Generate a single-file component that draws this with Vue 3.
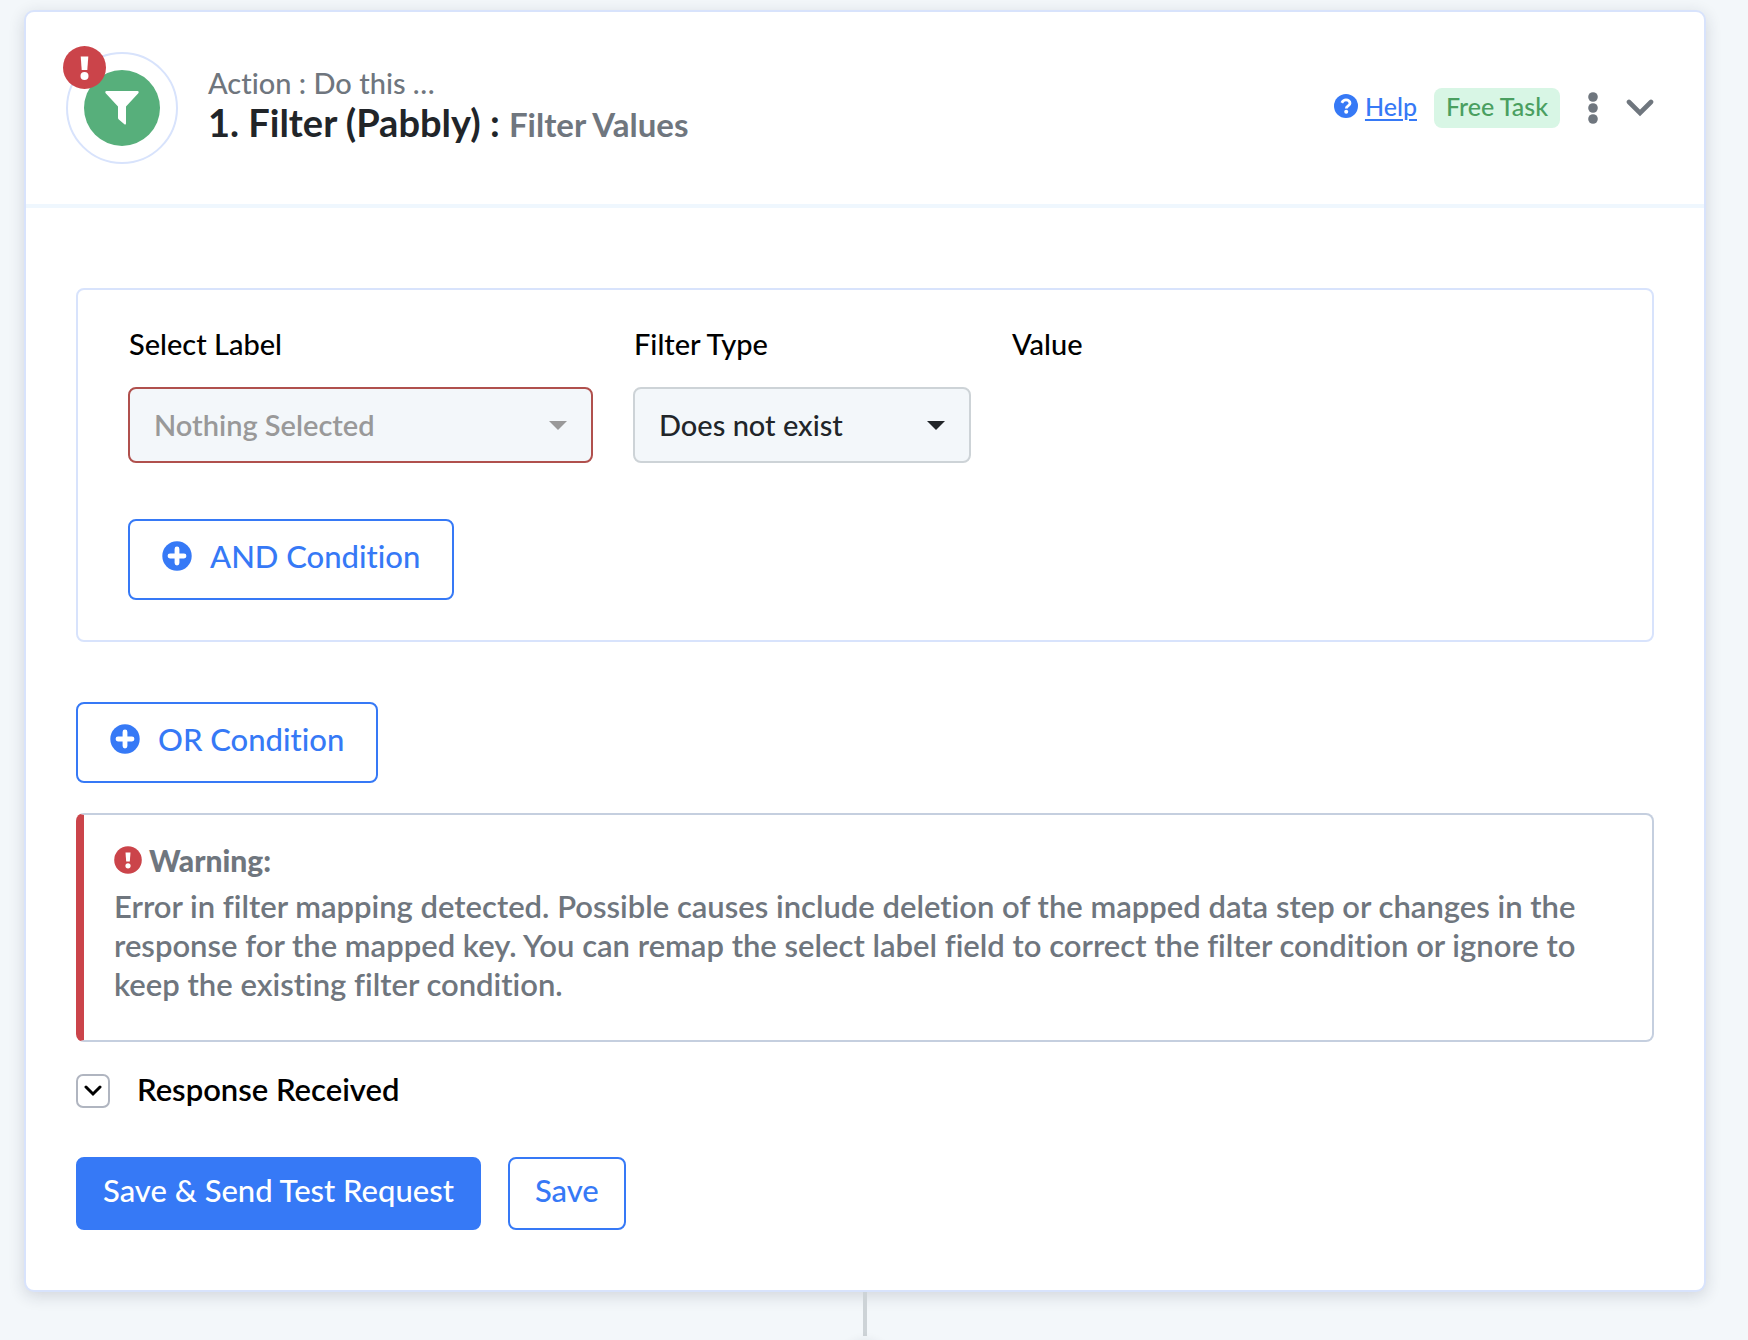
<script setup>
import { ref } from 'vue'

const label = ref('')
const filterType = ref('not-exist')
</script>

<template>
  <main class="page">
    <section class="card">
      <header class="card-header">
        <div class="app-icon">
          <span class="app-disc">
            <svg width="34" height="34" viewBox="0 0 34 34" aria-hidden="true">
              <path fill="#fff" d="M1.500 0h31c1.300 0 1.500 1.300.8 2.200L21 15.500V32c0 1.600-.8 2-1.900 1l-5-4.200c-.8-.7-1.100-1.200-1.100-2.200V15.500L.7 2.200C0 1.300.2 0 1.500 0z" />
            </svg>
          </span>
          <svg class="alert-badge" width="43" height="43" viewBox="0 0 43 43" role="img" aria-label="Error">
            <circle cx="21.500" cy="21.500" r="21.500" fill="#cb444a" />
            <path fill="#fff" d="M17.700 10.500h7.600l-1 13.500h-5.600z" />
            <circle cx="21.500" cy="30" r="4" fill="#fff" />
          </svg>
        </div>
        <div class="titles">
          <p class="kicker">Action : Do this …</p>
          <h1 class="title">1. Filter (Pabbly) : <span class="subtitle">Filter Values</span></h1>
        </div>
        <div class="header-actions">
          <a class="help" href="#help">
            <svg width="24" height="24" viewBox="0 0 24 24" aria-hidden="true">
              <circle cx="12" cy="12" r="12" fill="#3679f6" />
              <path fill="none" stroke="#fff" stroke-width="2.800" d="M7.800 8.800C8.800 6.800 10.200 5.900 12 5.900c2.200 0 4 1.400 4 3.300 0 2.700-3.700 2.600-3.700 5.200" />
              <circle cx="12.200" cy="17.800" r="2" fill="#fff" />
            </svg>
            <span>Help</span>
          </a>
          <span class="tag">Free Task</span>
          <button class="icon-button dots" type="button" aria-label="More options">
            <svg width="10" height="32" viewBox="0 0 10 32" aria-hidden="true">
              <g fill="#6f767e"><circle cx="5" cy="5" r="4.800" /><circle cx="5" cy="16" r="4.800" /><circle cx="5" cy="27" r="4.800" /></g>
            </svg>
          </button>
          <button class="icon-button" type="button" aria-label="Collapse step">
            <svg width="28" height="18" viewBox="0 0 28 18" aria-hidden="true">
              <path d="M3 3l11 11L25 3" fill="none" stroke="#6f767e" stroke-width="4.600" stroke-linecap="round" />
            </svg>
          </button>
        </div>
      </header>

      <div class="card-body">
        <div class="conditions">
          <div class="fields">
            <div class="field">
              <label for="select-label">Select Label</label>
              <div class="select-wrap">
                <select id="select-label" v-model="label" class="invalid">
                  <option value="">Nothing Selected</option>
                </select>
                <svg class="caret" width="18" height="9" viewBox="0 0 18 9" aria-hidden="true"><path fill="#999" d="M0 0h18L9 9z" /></svg>
              </div>
            </div>
            <div class="field">
              <label for="filter-type">Filter Type</label>
              <div class="select-wrap">
                <select id="filter-type" v-model="filterType">
                  <option value="not-exist">Does not exist</option>
                </select>
                <svg class="caret" width="18" height="9" viewBox="0 0 18 9" aria-hidden="true"><path fill="#212529" d="M0 0h18L9 9z" /></svg>
              </div>
            </div>
            <div class="field">
              <span class="field-heading">Value</span>
            </div>
          </div>
          <button class="button add" type="button">
            <svg width="30" height="30" viewBox="0 0 30 30" aria-hidden="true">
              <circle cx="15" cy="15" r="14.700" fill="#3679f6" />
              <path d="M15 8v14M8 15h14" stroke="#fff" stroke-width="4.800" stroke-linecap="round" />
            </svg>
            AND Condition
          </button>
        </div>

        <button class="button add" type="button">
          <svg width="30" height="30" viewBox="0 0 30 30" aria-hidden="true">
            <circle cx="15" cy="15" r="14.700" fill="#3679f6" />
            <path d="M15 8v14M8 15h14" stroke="#fff" stroke-width="4.800" stroke-linecap="round" />
          </svg>
          OR Condition
        </button>

        <div class="warning" role="alert">
          <p class="warning-title">
            <svg width="28" height="28" viewBox="0 0 28 28" aria-hidden="true">
              <circle cx="14" cy="14" r="13.800" fill="#cb444a" />
              <path fill="#fff" d="M11.500 6.500h5l-.7 9h-3.600z" />
              <circle cx="14" cy="19.800" r="2.600" fill="#fff" />
            </svg>
            Warning:
          </p>
          <p class="warning-text">
            Error in filter mapping detected. Possible causes include deletion of the mapped data step or changes in the
            response for the mapped key. You can remap the select label field to correct the filter condition or ignore to
            keep the existing filter condition.
          </p>
        </div>

        <div class="response">
          <button class="toggle" type="button" aria-labelledby="response-label">
            <svg width="18" height="12" viewBox="0 0 18 12" aria-hidden="true">
              <path d="M2 2l7 7 7-7" fill="none" stroke="#000" stroke-width="3" stroke-linecap="round" />
            </svg>
          </button>
          <span id="response-label">Response Received</span>
        </div>

        <div class="buttons">
          <button class="button primary" type="button">Save &amp; Send Test Request</button>
          <button class="button" type="button">Save</button>
        </div>
      </div>
    </section>
    <div class="connector"></div>
    <div class="next-step"></div>
  </main>
</template>

<style>
body {
  margin: 0;
  background: #f3f7fa;
}
</style>

<style scoped>
* {
  box-sizing: border-box;
}

.page {
  display: flex;
  flex-direction: column;
  align-items: center;
  height: 100vh;
  overflow: hidden;
  padding: 10px 42px 0 24px;
  background: #f3f7fa;
  font-family: Lato, "Open Sans", sans-serif;
  font-weight: 500;
  font-variant-ligatures: no-common-ligatures;
  color: #000;
}

p,
h1 {
  margin: 0;
}

svg {
  display: block;
  flex: none;
}

button,
select {
  font: inherit;
  font-variant-ligatures: no-common-ligatures;
}

.card {
  align-self: stretch;
  flex: none;
  background: #fff;
  border: 2px solid #d8e3fc;
  border-radius: 10px;
  box-shadow: 0 4px 16px rgba(30, 40, 60, 0.16);
}

.card-header {
  display: flex;
  align-items: flex-start;
  padding: 40px 50px 40px 40px;
  border-bottom: 4px solid #eff7fe;
}

.app-icon {
  position: relative;
  display: flex;
  align-items: center;
  justify-content: center;
  width: 112px;
  height: 112px;
  border: 2px solid #d8e3fc;
  border-radius: 50%;
}

.app-disc {
  display: flex;
  align-items: center;
  justify-content: center;
  width: 76px;
  height: 76px;
  border-radius: 50%;
  background: #57af7b;
}

.alert-badge {
  position: absolute;
  top: -8px;
  left: -5px;
}

.titles {
  flex: 1;
  padding: 13px 0 0 30px;
}

.kicker {
  font-size: 29px;
  line-height: 36px;
  color: #6f767e;
}

.title {
  font-size: 38px;
  line-height: 42px;
  font-weight: 700;
  color: #212529;
}

.subtitle {
  font-size: 33px;
  font-weight: 700;
  color: #6f767e;
}

.header-actions {
  display: flex;
  align-items: center;
  height: 112px;
}

.help {
  display: flex;
  align-items: center;
  gap: 7px;
  padding-bottom: 4px;
  margin-right: 17px;
  font-size: 25px;
  line-height: 32px;
  color: #3679f6;
  text-decoration: none;
}

.help span {
  text-decoration: underline;
  text-decoration-thickness: 2px;
  text-underline-offset: 3px;
}

.tag {
  padding: 2px 12px 6px;
  margin-right: 28px;
  border-radius: 8px;
  background: #d8f6e5;
  color: #4a9f60;
  font-size: 25px;
  line-height: 32px;
}

.icon-button {
  padding: 0;
  border: 0;
  background: none;
}

.dots {
  margin-right: 28px;
}

.card-body {
  display: flex;
  flex-direction: column;
  align-items: flex-start;
  padding: 80px 50px 60px;
}

.conditions {
  align-self: stretch;
  padding: 36px 50px 40px;
  margin-bottom: 60px;
  border: 2px solid #d8e3fc;
  border-radius: 8px;
}

.fields {
  display: grid;
  grid-template-columns: 465fr 338fr 591fr;
  gap: 40px;
  margin-bottom: 56px;
}

.field label,
.field-heading {
  display: block;
  padding-left: 1px;
  margin-bottom: 25px;
  font-size: 29px;
  line-height: 36px;
}

.select-wrap {
  position: relative;
}

select {
  display: block;
  width: 100%;
  height: 76px;
  padding: 0 60px 2px 24px;
  appearance: none;
  border: 2px solid #cdd3d7;
  border-radius: 8px;
  background: #f3f7fa;
  color: #212529;
  font-size: 29px;
}

select.invalid {
  border-color: #b0504d;
  color: #999;
  font-weight: 600;
}

.caret {
  position: absolute;
  top: 34px;
  right: 26px;
  pointer-events: none;
}

.button {
  display: flex;
  align-items: center;
  padding: 13px 25px 20px;
  border: 2px solid #3679f6;
  border-radius: 8px;
  background: #fff;
  color: #3679f6;
  font-size: 31px;
  line-height: 36px;
}

.button.primary {
  background: #3679f6;
  color: #fff;
}

.add {
  gap: 18px;
  padding: 17px 32px 24px;
}

.warning {
  align-self: stretch;
  padding: 27px 30px 36px;
  margin: 30px 0 32px;
  border: 2px solid #c5cfdf;
  border-left: 8px solid #cb444a;
  border-radius: 8px;
  color: #6f767e;
  font-size: 31px;
  line-height: 39px;
  font-weight: 600;
}

.warning-title {
  display: flex;
  align-items: center;
  gap: 7px;
  margin-bottom: 9px;
  font-size: 30px;
  line-height: 36px;
  font-weight: 900;
}

.response {
  display: flex;
  align-items: flex-start;
  gap: 27px;
  margin-bottom: 49px;
  font-size: 31px;
  line-height: 30px;
  font-weight: 600;
}

.toggle {
  display: flex;
  align-items: center;
  justify-content: center;
  width: 34px;
  height: 34px;
  padding: 0;
  border: 2px solid #b0b5c0;
  border-radius: 7px;
  background: #fff;
}

.buttons {
  display: flex;
  gap: 27px;
}

.connector {
  flex: none;
  width: 4px;
  height: 44px;
  background: #cdd3d7;
}

.next-step {
  flex: none;
  width: 40px;
  height: 40px;
  margin-top: 6px;
  border-radius: 50%;
  background: #fff;
  box-shadow: 0 0 12px rgba(30, 40, 60, 0.12);
}
</style>
